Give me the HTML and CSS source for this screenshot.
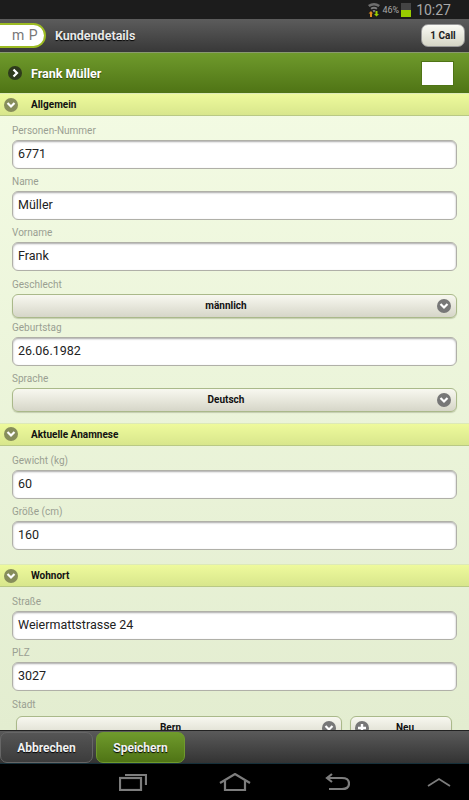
FILE: index.html
```html
<!DOCTYPE html>
<html lang="de">
<head>
    <meta charset="UTF-8">
    <meta name="viewport" content="width=device-width, initial-scale=1.0">
    <title>Kundendetails</title>
    <link rel="stylesheet" href="styles.css">
</head>
<body>
    <div class="screen">
        <div class="status-bar">
            <svg class="wifi-icon" width="12" height="15" viewBox="0 0 12 15">
                <path d="M0 3 Q6 -1 12 3 L10.500 5 Q6 2 1.500 5 Z" fill="#6e6e6e"/>
                <path d="M2.500 6 Q6 3.500 9.500 6 L8.500 7.500 Q6 6 3.500 7.500 Z" fill="#7c7c7c"/>
                <path d="M4.500 8.500 Q6 7.500 7.500 8.500 L6 10.500 Z" fill="#8c8c8c"/>
                <path d="M2 15 V11.500 H0.500 L3 9 L5 11.500 H4 V15 Z" fill="#e08a1e"/>
                <path d="M7.500 9 V12 H6 L8.500 14.500 L11 12 H9.500 V9 Z" fill="#9c0"/>
            </svg>
            <span class="battery-text">46%</span>
            <div class="battery"><div class="battery-level"></div></div>
            <span class="clock">10:27</span>
        </div>

        <div class="header">
            <div class="logo">m P</div>
            <h1 class="header-title">Kundendetails</h1>
            <button class="call-btn">1 Call</button>
        </div>

        <div class="person-bar">
            <span class="round-icon round-icon-dark">
                <svg width="10" height="10" viewBox="0 0 10 10"><path d="M3.500 1.500 L7 5 L3.500 8.500" fill="none" stroke="#fff" stroke-width="2.200"/></svg>
            </span>
            <span class="person-name">Frank Müller</span>
            <div class="person-box"></div>
        </div>

        <div class="content">
            <div class="section-head">
                <span class="round-icon round-icon-olive">
                    <svg width="10" height="10" viewBox="0 0 10 10"><path d="M1.500 3 L5 6.500 L8.500 3" fill="none" stroke="#fff" stroke-width="2.200"/></svg>
                </span>
                <span>Allgemein</span>
            </div>
            <div class="section-body">
                <label class="field-label">Personen-Nummer</label>
                <div class="text-input">6771</div>
                <label class="field-label">Name</label>
                <div class="text-input">Müller</div>
                <label class="field-label">Vorname</label>
                <div class="text-input">Frank</div>
                <label class="field-label">Geschlecht</label>
                <div class="select-btn">
                    <span>männlich</span>
                    <span class="round-icon round-icon-grey select-icon">
                        <svg width="10" height="10" viewBox="0 0 10 10"><path d="M1.500 3 L5 6.500 L8.500 3" fill="none" stroke="#fff" stroke-width="2.200"/></svg>
                    </span>
                </div>
                <label class="field-label">Geburtstag</label>
                <div class="text-input">26.06.1982</div>
                <label class="field-label">Sprache</label>
                <div class="select-btn">
                    <span>Deutsch</span>
                    <span class="round-icon round-icon-grey select-icon">
                        <svg width="10" height="10" viewBox="0 0 10 10"><path d="M1.500 3 L5 6.500 L8.500 3" fill="none" stroke="#fff" stroke-width="2.200"/></svg>
                    </span>
                </div>
            </div>

            <div class="section-head">
                <span class="round-icon round-icon-olive">
                    <svg width="10" height="10" viewBox="0 0 10 10"><path d="M1.500 3 L5 6.500 L8.500 3" fill="none" stroke="#fff" stroke-width="2.200"/></svg>
                </span>
                <span>Aktuelle Anamnese</span>
            </div>
            <div class="section-body">
                <label class="field-label">Gewicht (kg)</label>
                <div class="text-input">60</div>
                <label class="field-label">Größe (cm)</label>
                <div class="text-input">160</div>
            </div>

            <div class="section-head">
                <span class="round-icon round-icon-olive">
                    <svg width="10" height="10" viewBox="0 0 10 10"><path d="M1.500 3 L5 6.500 L8.500 3" fill="none" stroke="#fff" stroke-width="2.200"/></svg>
                </span>
                <span>Wohnort</span>
            </div>
            <div class="section-body">
                <label class="field-label">Straße</label>
                <div class="text-input">Weiermattstrasse 24</div>
                <label class="field-label">PLZ</label>
                <div class="text-input">3027</div>
                <label class="field-label">Stadt</label>
                <div class="city-row">
                    <div class="select-btn city-select">
                        <span>Bern</span>
                        <span class="round-icon round-icon-grey select-icon">
                            <svg width="10" height="10" viewBox="0 0 10 10"><path d="M1.500 3 L5 6.500 L8.500 3" fill="none" stroke="#fff" stroke-width="2.200"/></svg>
                        </span>
                    </div>
                    <div class="select-btn city-new">
                        <span class="round-icon round-icon-grey plus-icon">
                            <svg width="10" height="10" viewBox="0 0 10 10"><path d="M5 1 V9 M1 5 H9" fill="none" stroke="#fff" stroke-width="2.400"/></svg>
                        </span>
                        <span>Neu</span>
                    </div>
                </div>
            </div>
        </div>

        <div class="footer">
            <button class="footer-btn">Abbrechen</button>
            <button class="footer-btn footer-btn-save">Speichern</button>
        </div>

        <div class="nav-bar">
            <svg width="28" height="18" viewBox="0 0 28 18" fill="none" stroke="#7d7d7d" stroke-width="2.200">
                <rect x="1" y="5" width="21" height="12"/>
                <path d="M6 2 H27 V12"/>
            </svg>
            <svg width="32" height="18" viewBox="0 0 32 18" fill="none" stroke="#7d7d7d" stroke-width="2.200">
                <path d="M1 10 L16 1 L31 10 M6 8 V17 H26 V8"/>
            </svg>
            <svg width="25" height="18" viewBox="0 0 25 18" fill="none" stroke="#7d7d7d" stroke-width="2.200">
                <path d="M7 1 L2 5 L7 9"/>
                <path d="M2 5 H17 Q24 5 24 10.500 Q24 16 17 16 H4"/>
            </svg>
            <svg class="nav-up" width="24" height="10" viewBox="0 0 24 10" fill="none" stroke="#7d7d7d" stroke-width="1.800">
                <path d="M1 9 L12 2 L23 9"/>
            </svg>
        </div>
    </div>
</body>
</html>
```
FILE: styles.css
```css
* {
    box-sizing: border-box;
}

body {
    margin: 0;
    font-family: Roboto, "Liberation Sans", sans-serif;
    background-color: #000;
}

.screen {
    width: 469px;
    height: 800px;
    display: flex;
    flex-direction: column;
    overflow: hidden;
}

/* status bar */
.status-bar {
    height: 19px;
    flex: none;
    background-color: #1c1c1c;
    display: flex;
    align-items: center;
    justify-content: flex-end;
    padding-right: 18px;
    color: #a8a8a8;
}

.wifi-icon {
    margin-right: 2px;
}

.battery-text {
    font-size: 9px;
    margin-right: 2px;
}

.battery {
    width: 10px;
    height: 14px;
    background-color: #444;
    margin-right: 5px;
    display: flex;
    align-items: flex-end;
}

.battery-level {
    width: 100%;
    height: 7px;
    background-color: #9c0;
}

.clock {
    font-size: 14px;
}

/* header */
.header {
    height: 34px;
    flex: none;
    background: linear-gradient(#5c5c5c, #383838);
    border-bottom: 1px solid #8a9a70;
    display: flex;
    align-items: center;
}

.logo {
    width: 46px;
    height: 25px;
    background-color: #fff;
    border: 2px solid #9cbb22;
    border-left: none;
    border-radius: 0 13px 13px 0;
    color: #777;
    font-size: 14px;
    letter-spacing: 0.500px;
    line-height: 21px;
    padding-left: 12px;
}

.header-title {
    margin: 0 0 0 9px;
    flex: 1;
    font-size: 12.500px;
    font-weight: 700;
    color: #e8e8e8;
    text-shadow: 0 1px 1px #000;
}

.call-btn {
    width: 44px;
    height: 23px;
    margin-right: 4px;
    padding: 0;
    background: linear-gradient(#fbfbf5, #d5d5c5);
    border: 1px solid #999;
    border-radius: 7px;
    font-family: inherit;
    font-size: 10px;
    font-weight: 700;
    color: #222;
}

/* person bar */
.person-bar {
    height: 40px;
    flex: none;
    background: linear-gradient(#6f9a2c, #4f7415);
    display: flex;
    align-items: center;
    padding-left: 8px;
}

.person-name {
    margin-left: 9px;
    flex: 1;
    font-size: 12.500px;
    font-weight: 700;
    color: #fff;
    text-shadow: 0 1px 1px #2c4208;
}

.person-box {
    width: 33px;
    height: 25px;
    margin-right: 15px;
    background-color: #fff;
    border: 1px solid #4f7415;
}

/* round icons */
.round-icon {
    width: 14px;
    height: 14px;
    flex: none;
    border-radius: 50%;
    display: flex;
    align-items: center;
    justify-content: center;
}

.round-icon-dark {
    background-color: #2e3a1c;
}

.round-icon-olive {
    background-color: #868d5b;
}

.round-icon-grey {
    background-color: #777;
}

/* sections */
.content {
    flex: 1;
    min-height: 0;
    overflow: hidden;
    background: linear-gradient(#f3fbe3, #e3edd0);
}

.section-head {
    height: 23px;
    background: linear-gradient(#eefa9c, #d8e68c);
    border-top: 1px solid #dde9b8;
    border-bottom: 1px solid #b9c984;
    display: flex;
    align-items: center;
    padding-left: 4px;
    font-size: 10px;
    font-weight: 700;
    color: #111;
}

.section-head > span:last-child {
    margin-left: 13px;
}

.section-body {
    padding: 8px 12px;
}

.field-label {
    display: block;
    height: 16px;
    font-size: 10px;
    line-height: 13px;
    color: #9a9f92;
}

.text-input {
    height: 29px;
    margin-bottom: 6.200px;
    padding-left: 5px;
    background-color: #fff;
    border: 1px solid #b0b0a8;
    border-radius: 6px;
    box-shadow: inset 0 1px 2px #aaa;
    font-size: 12.500px;
    line-height: 26px;
    color: #222;
}

.select-btn {
    height: 24px;
    position: relative;
    margin-bottom: 3px;
    padding-right: 17px;
    background: linear-gradient(#f8f8f0, #d6d6c8);
    border: 1px solid #aab98a;
    border-radius: 6px;
    box-shadow: 0 1px 1px #c4cdb0;
    font-size: 10px;
    font-weight: 700;
    line-height: 22px;
    text-align: center;
    color: #111;
}

.select-icon {
    position: absolute;
    right: 5px;
    top: 4px;
}

.plus-icon {
    position: absolute;
    left: 4px;
    top: 4px;
}

.city-row {
    display: flex;
    gap: 8px;
    padding: 2px 5px 0 4px;
}

.city-select {
    flex: 1;
}

.city-new {
    width: 102px;
    padding-right: 0;
    padding-left: 8px;
}

/* footer */
.footer {
    height: 33px;
    flex: none;
    background: linear-gradient(#5a5a5a, #333);
    border-top: 1px solid #222;
    display: flex;
    gap: 3px;
    padding-top: 1px;
}

.footer-btn {
    width: 93px;
    height: 31px;
    padding: 0;
    background: linear-gradient(#555, #3c3c3c);
    border: 1px solid #666;
    border-radius: 7px;
    font-family: inherit;
    font-size: 12px;
    font-weight: 700;
    color: #f2f2f2;
    text-shadow: 0 1px 1px #000;
}

.footer-btn-save {
    width: 89px;
    background: linear-gradient(#6f9a2c, #4f7415);
    border-color: #6f9a2c;
}

/* android nav */
.nav-bar {
    height: 37px;
    flex: none;
    background-color: #000;
    border-top: 1px solid #16303a;
    display: grid;
    grid-template-columns: repeat(4, 102px);
    justify-items: center;
    padding: 9px 0 0 82px;
}

.nav-up {
    margin-top: 4px;
}
```
